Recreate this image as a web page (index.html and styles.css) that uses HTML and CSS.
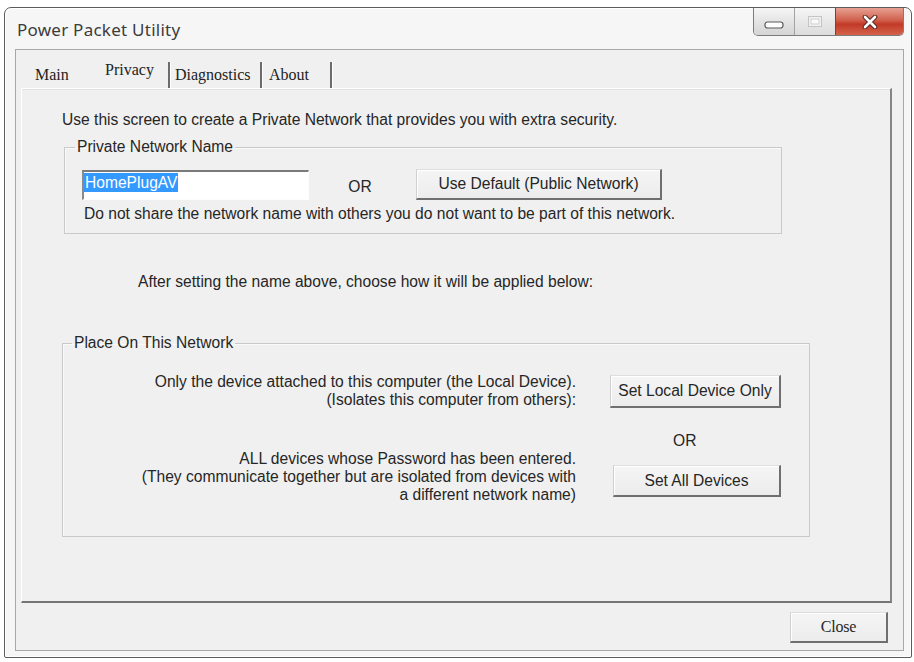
FILE: index.html
```html
<!DOCTYPE html>
<html>
<head>
<meta charset="utf-8">
<title>Power Packet Utility</title>
<link rel="stylesheet" href="styles.css">
</head>
<body>
<div class="window">
  <div class="titlebar">
    <span class="title">Power Packet Utility</span>
    <div class="controls">
      <div class="ctl min">
        <svg width="20" height="8" viewBox="0 0 20 8"><rect x="1" y="1" width="18" height="6" rx="2.5" fill="#fdfdfd" stroke="#5a5a5a" stroke-width="1.2"/></svg>
      </div>
      <div class="ctl max">
        <svg width="14" height="11" viewBox="0 0 14 11"><rect x="0.5" y="0.5" width="13" height="10" fill="#f2f2f2" stroke="#c4c4c4"/><rect x="3" y="3" width="8" height="5" fill="#fafafa" stroke="#cfcfcf"/></svg>
      </div>
      <div class="ctl cls">
        <svg width="16" height="14" viewBox="0 0 16 14"><path d="M3 2 L13 12 M13 2 L3 12" stroke="#5a2a24" stroke-width="4.6" stroke-linecap="round"/><path d="M3 2 L13 12 M13 2 L3 12" stroke="#ffffff" stroke-width="2.6" stroke-linecap="round"/></svg>
      </div>
    </div>
  </div>
  <div class="client">
    <div class="tabs">
      <span class="tab t-main">Main</span>
      <span class="tab t-privacy active">Privacy</span>
      <span class="sep"></span>
      <span class="tab t-diag">Diagnostics</span>
      <span class="sep"></span>
      <span class="tab t-about">About</span>
      <span class="sep sep-last"></span>
    </div>
    <div class="page">
      <p class="intro">Use this screen to create a Private Network that provides you with extra security.</p>
      <fieldset class="group g1">
        <legend>Private Network Name</legend>
        <div class="g1-body">
          <div class="row">
            <div class="input"><span class="sel">HomePlugAV</span></div>
            <span class="or">OR</span>
            <button class="btn btn-default">Use Default (Public Network)</button>
          </div>
          <p class="note">Do not share the network name with others you do not want to be part of this network.</p>
        </div>
      </fieldset>
      <p class="after">After setting the name above, choose how it will be applied below:</p>
      <fieldset class="group g2">
        <legend>Place On This Network</legend>
        <div class="grid">
          <div class="desc d1">Only the device attached to this computer (the Local Device).<br>(Isolates this computer from others):</div>
          <button class="btn btn-local">Set Local Device Only</button>
          <div class="or2">OR</div>
          <div class="desc d2">ALL devices whose Password has been entered.<br>(They communicate together but are isolated from devices with<br>a different network name)</div>
          <button class="btn btn-all">Set All Devices</button>
        </div>
      </fieldset>
    </div>
    <div class="footer">
      <button class="btn btn-close">Close</button>
    </div>
  </div>
</div>
</body>
</html>
```
FILE: styles.css
```css
* { box-sizing: border-box; }
html, body { margin: 0; padding: 0; background: #ffffff; }
body {
  font-family: "Liberation Sans", Arial, sans-serif;
  font-size: 15.6px;
  color: #262626;
}

.window {
  margin: 7px 0 0 4px;
  width: 908px;
  height: 651px;
  border: 1px solid #5c5c5c;
  border-radius: 7px 7px 2px 2px;
  background: #f6f6f6;
  box-shadow: inset 1px 1px 0 #ffffff, inset -1px -1px 0 #ffffff;
  display: flex;
  flex-direction: column;
}

.titlebar {
  flex: none;
  height: 41px;
  display: flex;
  align-items: flex-start;
}
.title {
  margin: 12px 0 0 12px;
  font-family: "Noto Sans", "Open Sans", sans-serif;
  font-size: 17px;
  letter-spacing: 0.25px;
  line-height: 20px;
  color: #3c3c3c;
}
.controls {
  margin-left: auto;
  margin-right: 7px;
  display: flex;
  height: 28px;
  border: 1px solid #7c7c7c;
  border-top: none;
  border-radius: 0 0 5px 5px;
  overflow: hidden;
}
.ctl {
  height: 100%;
  display: flex;
  align-items: center;
  justify-content: center;
}
.min {
  width: 41px;
  background: linear-gradient(#f6f6f6, #e4e4e4 50%, #d4d4d4);
  border-right: 1px solid #a3a3a3;
}
.min svg { margin-top: 6px; }
.max {
  width: 40px;
  background: linear-gradient(#f6f6f6, #e8e8e8 50%, #dcdcdc);
}
.max svg { margin-top: -1px; }
.cls {
  width: 68px;
  background: linear-gradient(#e7a193, #d0604c 45%, #c23a26 60%, #d4634c);
  border-left: 1px solid #8c3b31;
}

.client {
  flex: 1;
  margin: 0 7px 6px 10px;
  border: 1px solid #a8a8a8;
  background: #f0f0f0;
  display: flex;
  flex-direction: column;
  padding: 0 11px 0 5px;
}

.tabs {
  flex: none;
  height: 38px;
  display: flex;
  align-items: flex-end;
  font-family: "Liberation Serif", "Times New Roman", serif;
  font-size: 16px;
  color: #222;
}
.tab {
  line-height: 18px;
  padding-bottom: 4px;
}
.t-main { margin-left: 14px; width: 70px; }
.t-privacy { padding-bottom: 9px; width: 63px; }
.t-diag { margin-left: 5px; width: 85px; }
.t-about { margin-left: 7px; width: 61px; }
.sep {
  width: 2px;
  height: 27px;
  margin-bottom: -1px;
  background: #6c6c6c;
  box-shadow: 1px 0 0 #ffffff;
}

.page {
  flex: none;
  height: 515px;
  border-top: 1px solid #ffffff;
  border-left: 1px solid #ffffff;
  border-right: 2px solid #858585;
  border-bottom: 2px solid #747474;
  box-shadow: inset 0 1px 0 #e2e2e2;
  padding: 22px 0 0 40px;
}

p { margin: 0; }
.intro { line-height: 18px; }

.group {
  margin: 0;
  border: 1px solid #c9c9c9;
  box-shadow: inset 1px 1px 0 #fafafa;
}
.group legend {
  padding: 0 2px;
  line-height: 18px;
}

.g1 {
  margin: 9px 0 0 2px;
  width: 718px;
  padding: 13px 10px 10px 10px;
}
.g1-body { padding-left: 7px; }
.row {
  display: flex;
  align-items: center;
}
.input {
  width: 227px;
  height: 30px;
  background: #ffffff;
  border-top: 2px solid #7a7a7a;
  border-left: 2px solid #8a8a8a;
  border-right: 1px solid #fdfdfd;
  border-bottom: 1px solid #fdfdfd;
  padding: 1px 0 0 0;
}
.sel {
  display: inline-block;
  background: #3399ff;
  color: #ffffff;
  line-height: 19px;
  padding: 0 1px 0 1px;
}
.or {
  width: 24px;
  margin: 4px 44px 0 39px;
  text-align: center;
}
.btn {
  font-family: "Liberation Sans", Arial, sans-serif;
  font-size: 15.6px;
  color: #262626;
  background: linear-gradient(#f5f5f5, #ececec);
  border-top: 1px solid #dedede;
  border-left: 1px solid #cfcfcf;
  border-right: 2px solid #6f6f6f;
  border-bottom: 2px solid #6f6f6f;
  box-shadow: inset 1px 1px 0 #ffffff;
  border-radius: 0;
  padding: 0;
  margin: 0;
}
.btn-default { width: 246px; height: 31px; }
.note {
  margin-top: 5px;
  padding-left: 2px;
  line-height: 18px;
}

.after {
  margin: 39px 0 0 76px;
  line-height: 18px;
}

.g2 {
  margin: 43px 0 0 0;
  width: 748px;
  padding: 21px 28px 32px 9px;
}
.grid {
  display: grid;
  grid-template-columns: 1fr 171px;
  column-gap: 34px;
}
.desc {
  text-align: right;
  line-height: 18px;
}
.btn-local {
  height: 33px;
  align-self: center;
}
.or2 {
  grid-column: 2;
  margin: 23px 0 0 63px;
  line-height: 18px;
}
.btn-all {
  height: 32px;
  align-self: start;
  margin-top: 15px;
  margin-left: 3px;
  width: 168px;
}

.footer {
  flex: 1;
  display: flex;
  justify-content: flex-end;
  align-items: flex-start;
}
.btn-close {
  margin: 9px 4px 0 0;
  width: 98px;
  height: 31px;
  font-family: "Liberation Serif", "Times New Roman", serif;
  font-size: 16px;
  letter-spacing: -0.2px;
}
```
